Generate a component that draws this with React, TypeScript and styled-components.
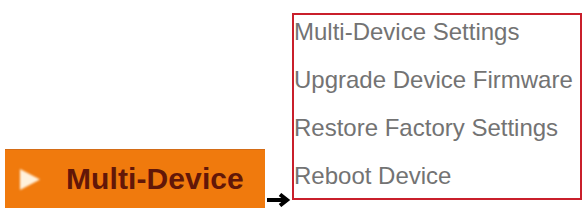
import styled, { createGlobalStyle } from "styled-components";

const GlobalStyle = createGlobalStyle`
  html, body {
    margin: 0;
    padding: 0;
    background: #ffffff;
  }
`;

const Stage = styled.div`
  display: flex;
  align-items: flex-start;
  width: 585px;
  height: 210px;
  padding-left: 5px;
  box-sizing: border-box;
  font-family: "Liberation Sans", Arial, sans-serif;
`;

const MenuButton = styled.div`
  align-self: flex-end;
  display: flex;
  align-items: center;
  gap: 24px;
  width: 260px;
  height: 59px;
  margin-bottom: 2px;
  padding-left: 12px;
  box-sizing: border-box;
  background: #f07a0d;
  border-top: 1px solid #d46d17;
`;

const PlayIcon = styled.svg`
  flex: none;
  filter: blur(0.8px);
`;

const ButtonLabel = styled.span`
  font-size: 30px;
  font-weight: bold;
  color: #621708;
  letter-spacing: 0.1px;
`;

const Pointer = styled.svg`
  align-self: flex-end;
  flex: none;
  margin: 0 0 3px 1px;
`;

const MenuBox = styled.ul`
  list-style: none;
  margin: 13px 0 0 0;
  padding: 3px 0 8px 0;
  width: 290px;
  height: 187px;
  box-sizing: border-box;
  border: 2px solid #c91f2b;
  display: flex;
  flex-direction: column;
  gap: 20px;
`;

const MenuItem = styled.li`
  height: 28px;
  line-height: 28px;
  font-size: 24px;
  color: #737373;
  white-space: nowrap;
`;

const items = [
  "Multi-Device Settings",
  "Upgrade Device Firmware",
  "Restore Factory Settings",
  "Reboot Device",
];

export default function App() {
  return (
    <>
      <GlobalStyle />
      <Stage>
        <MenuButton>
          <PlayIcon width="25" height="27" viewBox="0 0 25 27">
            <polygon points="3,3 23,13.5 3,24" fill="#fff1dc" />
          </PlayIcon>
          <ButtonLabel>Multi-Device</ButtonLabel>
        </MenuButton>
        <Pointer width="26" height="14" viewBox="0 0 26 14">
          <line x1="1" y1="7" x2="20" y2="7" stroke="#000" strokeWidth="4" />
          <polyline
            points="14,1.5 21,7 14,12.5"
            fill="none"
            stroke="#000"
            strokeWidth="4"
          />
        </Pointer>
        <MenuBox>
          {items.map(label => (
            <MenuItem key={label}>{label}</MenuItem>
          ))}
        </MenuBox>
      </Stage>
    </>
  );
}
